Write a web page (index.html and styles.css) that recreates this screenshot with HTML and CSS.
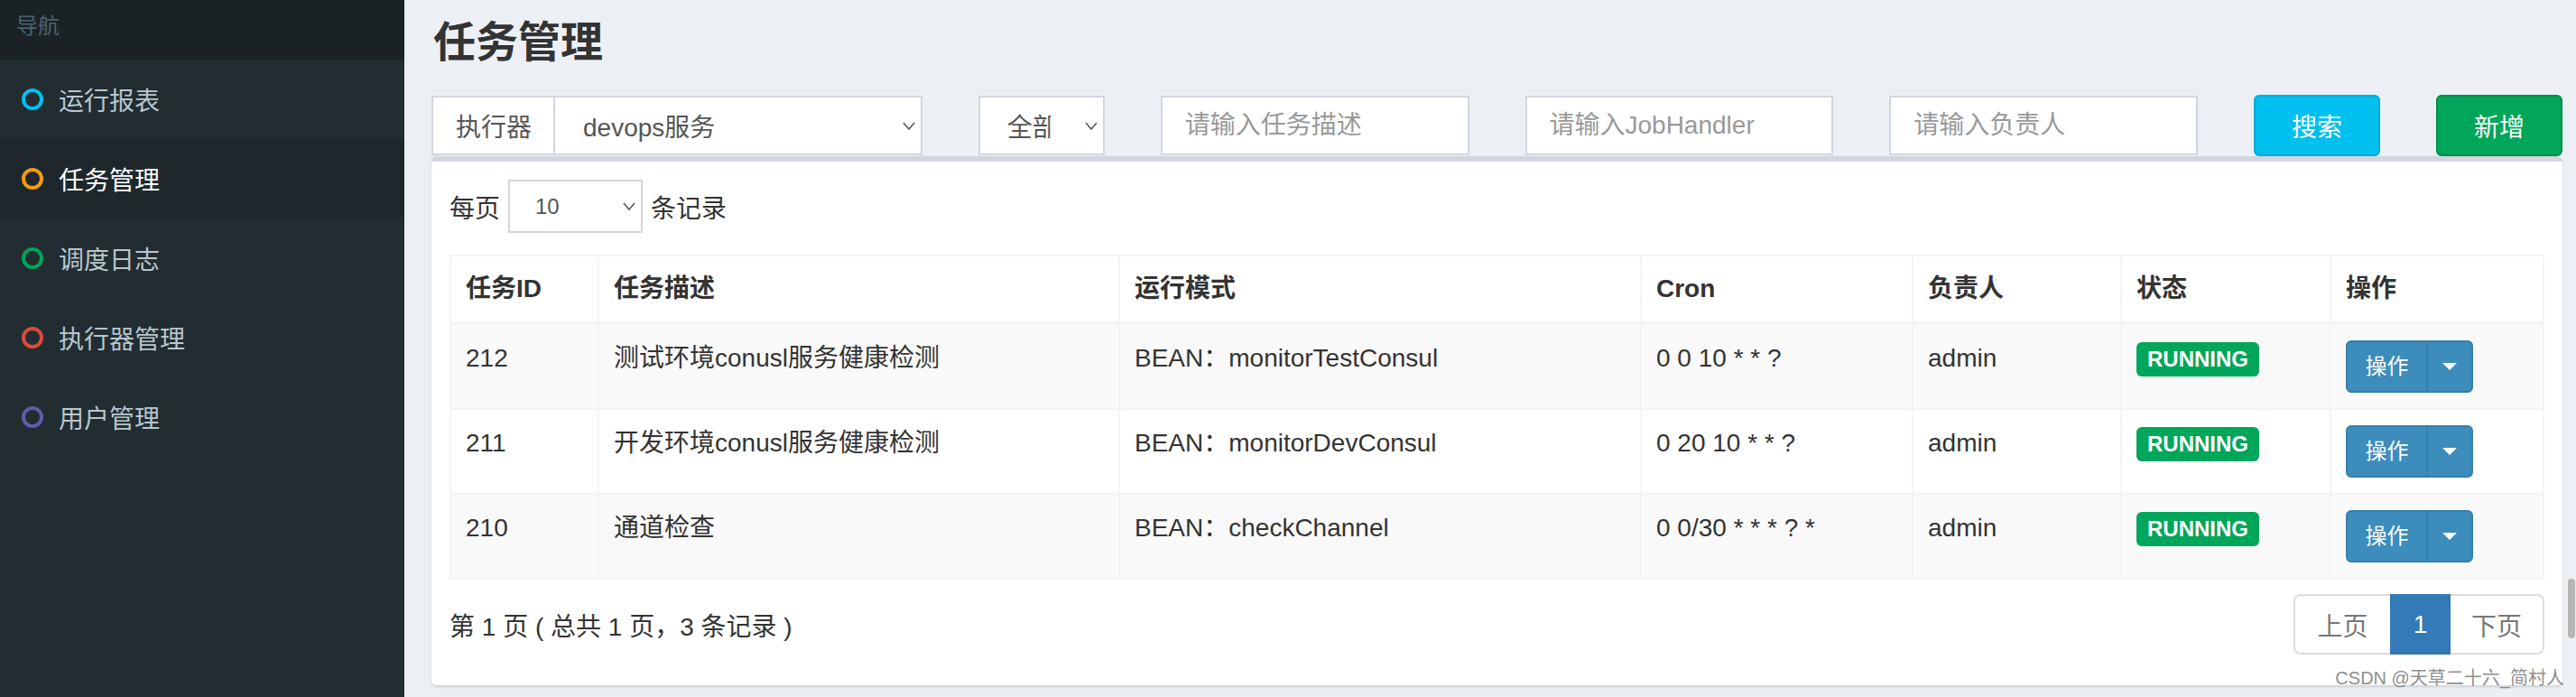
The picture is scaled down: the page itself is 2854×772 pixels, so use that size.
FILE: index.html
```html
<!DOCTYPE html>
<html lang="zh-CN">
<head>
<meta charset="utf-8">
<title>任务管理</title>
<link rel="stylesheet" href="styles.css">
</head>
<body>
<div class="app">
  <aside class="sidebar">
    <div class="nav-header">导航</div>
    <ul class="menu">
      <li class="menu-item"><span class="ring ring-aqua"></span><span>运行报表</span></li>
      <li class="menu-item active"><span class="ring ring-orange"></span><span>任务管理</span></li>
      <li class="menu-item"><span class="ring ring-green"></span><span>调度日志</span></li>
      <li class="menu-item"><span class="ring ring-red"></span><span>执行器管理</span></li>
      <li class="menu-item"><span class="ring ring-purple"></span><span>用户管理</span></li>
    </ul>
  </aside>
  <main class="content">
    <h1 class="page-title">任务管理</h1>
    <div class="filters">
      <div class="group span3">
        <span class="addon">执行器</span>
        <div class="select select-group">
          <span class="value">devops服务</span>
          <svg class="chev" width="14" height="9" viewBox="0 0 14 9"><path d="M1 1 L7 8 L13 1" fill="none" stroke="#555" stroke-width="1.6"/></svg>
        </div>
      </div>
      <div class="select select-short span1">
        <span class="value clip">全部</span>
        <svg class="chev" width="14" height="9" viewBox="0 0 14 9"><path d="M1 1 L7 8 L13 1" fill="none" stroke="#555" stroke-width="1.6"/></svg>
      </div>
      <input class="field span2" type="text" placeholder="请输入任务描述">
      <input class="field span2" type="text" placeholder="请输入JobHandler">
      <input class="field span2" type="text" placeholder="请输入负责人">
      <button class="btn btn-search span1">搜索</button>
      <button class="btn btn-add span1">新增</button>
    </div>
    <section class="box">
      <div class="box-body">
        <div class="length">
          <span>每页</span>
          <div class="select select-sm">
            <span class="value">10</span>
            <svg class="chev" width="14" height="9" viewBox="0 0 14 9"><path d="M1 1 L7 8 L13 1" fill="none" stroke="#555" stroke-width="1.6"/></svg>
          </div>
          <span>条记录</span>
        </div>
        <table class="grid">
          <colgroup>
            <col class="c-id"><col class="c-desc"><col class="c-mode"><col class="c-cron"><col class="c-owner"><col class="c-status"><col class="c-op">
          </colgroup>
          <thead>
            <tr><th>任务ID</th><th>任务描述</th><th>运行模式</th><th>Cron</th><th>负责人</th><th>状态</th><th>操作</th></tr>
          </thead>
          <tbody>
            <tr>
              <td>212</td><td>测试环境conusl服务健康检测</td><td>BEAN：monitorTestConsul</td><td>0 0 10 * * ?</td><td>admin</td>
              <td><span class="badge">RUNNING</span></td>
              <td><span class="op"><span class="op-main">操作</span><span class="op-caret"><span class="caret"></span></span></span></td>
            </tr>
            <tr>
              <td>211</td><td>开发环境conusl服务健康检测</td><td>BEAN：monitorDevConsul</td><td>0 20 10 * * ?</td><td>admin</td>
              <td><span class="badge">RUNNING</span></td>
              <td><span class="op"><span class="op-main">操作</span><span class="op-caret"><span class="caret"></span></span></span></td>
            </tr>
            <tr>
              <td>210</td><td>通道检查</td><td>BEAN：checkChannel</td><td>0 0/30 * * * ? *</td><td>admin</td>
              <td><span class="badge">RUNNING</span></td>
              <td><span class="op"><span class="op-main">操作</span><span class="op-caret"><span class="caret"></span></span></span></td>
            </tr>
          </tbody>
        </table>
        <div class="table-footer">
          <span class="info">第 1 页 ( 总共 1 页，3 条记录 )</span>
          <ul class="pagination">
            <li class="page disabled first">上页</li>
            <li class="page current">1</li>
            <li class="page disabled last">下页</li>
          </ul>
        </div>
      </div>
    </section>
    <div class="watermark">CSDN @天草二十六_简村人</div>
    <div class="scroll-thumb"></div>
  </main>
</div>
</body>
</html>
```
FILE: styles.css
```css
* { box-sizing: border-box; }
html, body {
  margin: 0;
  padding: 0;
  width: 2854px;
  height: 772px;
  overflow: hidden;
  font-family: "Liberation Sans", "Noto Sans CJK SC", sans-serif;
  color: #333;
  background: #ecf0f5;
}
.app {
  display: flex;
  height: 772px;
}

/* sidebar */
.sidebar {
  width: 448px;
  flex: 0 0 448px;
  background: #222d32;
  height: 772px;
}
.nav-header {
  height: 66px;
  background: #1a2226;
  color: #4b646f;
  font-size: 24px;
  line-height: 58px;
  padding-left: 18px;
}
.menu {
  list-style: none;
  margin: 0;
  padding: 0;
}
.menu-item {
  height: 88px;
  display: flex;
  align-items: center;
  padding-left: 24px;
  gap: 17px;
  font-size: 28px;
  color: #b8c7ce;
}
.menu-item.active {
  background: #1e282c;
  color: #fff;
}
.ring {
  width: 24px;
  height: 24px;
  border-radius: 50%;
  border: 4px solid;
  flex: 0 0 24px;
}
.ring-aqua { border-color: #00c0ef; }
.ring-orange { border-color: #f39c12; }
.ring-green { border-color: #00a65a; }
.ring-red { border-color: #dd4b39; }
.ring-purple { border-color: #605ca8; }

/* content */
.content {
  position: relative;
  flex: 1;
  padding: 21px 17px 0 30px;
}
.page-title {
  margin: 0 0 0 2px;
  font-size: 47px;
  line-height: 52px;
  font-weight: bold;
  color: #333;
}
.filters {
  margin-top: 32px;
  display: grid;
  grid-template-columns: repeat(12, 1fr);
  column-gap: 62px;
  height: 68px;
  align-items: start;
}
.span1 { grid-column: span 1; }
.span2 { grid-column: span 2; }
.span3 { grid-column: span 3; }

.group {
  display: flex;
  height: 66px;
  margin-top: 1px;
}
.addon {
  width: 135px;
  flex: 0 0 135px;
  border: 2px solid #d2d6de;
  border-right: 0;
  background: #fff;
  font-size: 28px;
  color: #555;
  display: flex;
  align-items: center;
  padding-left: 25px;
}
.select {
  display: flex;
  align-items: center;
  background: #fff;
  border: 2px solid #d2d6de;
  font-size: 28px;
  color: #555;
}
.select .value {
  flex: 1;
  white-space: nowrap;
}
.select .chev { flex: 0 0 14px; }
.select-group {
  flex: 1;
  height: 66px;
  padding: 0 6px 0 31px;
}
.select-short {
  height: 66px;
  margin-top: 1px;
  padding: 0 6px 0 30px;
}
.select-short .value.clip {
  flex: 0 0 48px;
  overflow: hidden;
  margin-right: auto;
}
.field {
  height: 66px;
  margin-top: 1px;
  width: 100%;
  border: 2px solid #d2d6de;
  border-radius: 0;
  background: #fff;
  font-family: inherit;
  font-size: 28px;
  padding: 0 25px;
  color: #555;
  outline: none;
}
.field::placeholder { color: #999; }
.btn {
  height: 68px;
  width: 100%;
  border-radius: 6px;
  border: 2px solid;
  color: #fff;
  font-family: inherit;
  font-size: 28px;
  padding: 0;
}
.btn-search { background: #00c0ef; border-color: #00acd6; }
.btn-add { background: #00a65a; border-color: #008d4c; }

/* box */
.box {
  background: #fff;
  border-top: 6px solid #d2d6de;
  border-radius: 6px;
  box-shadow: 0 2px 3px rgba(0, 0, 0, 0.12);
}
.box-body {
  padding: 20px 20px 34px 20px;
}
.length {
  display: flex;
  align-items: center;
  gap: 9px;
  font-size: 28px;
  color: #333;
}
.select-sm {
  width: 149px;
  height: 59px;
  font-size: 24px;
  padding: 0 6px 0 28px;
}

.grid {
  width: 100%;
  margin-top: 24px;
  border-collapse: collapse;
  border: 2px solid #f4f4f4;
  font-size: 28px;
  table-layout: fixed;
}
.c-id { width: 164px; }
.c-desc { width: 577px; }
.c-mode { width: 578px; }
.c-cron { width: 301px; }
.c-owner { width: 231px; }
.c-status { width: 232px; }
.c-op { width: 236px; }
.grid th, .grid td {
  border: 2px solid #f4f4f4;
  padding: 16px 16px;
  line-height: 40px;
  text-align: left;
  vertical-align: top;
  white-space: nowrap;
}
.grid th {
  font-weight: bold;
  border-bottom-width: 4px;
  background: #fff;
}
.grid td { padding-top: 17px; padding-bottom: 17px; }
.grid tbody tr:nth-child(odd) td { background: #f9f9f9; }
.grid tbody tr:nth-child(even) td { background: #fff; }

.badge {
  display: inline-block;
  vertical-align: top;
  margin-top: 2px;
  height: 38px;
  line-height: 38px;
  padding: 0 12px;
  border-radius: 6px;
  background: #00a65a;
  color: #fff;
  font-size: 24px;
  font-weight: bold;
}
.op {
  display: inline-flex;
  vertical-align: top;
  height: 58px;
  border-radius: 6px;
  overflow: hidden;
  border: 2px solid #367fa9;
  background: #3c8dbc;
  color: #fff;
  font-size: 24px;
}
.op-main {
  width: 89px;
  display: flex;
  align-items: center;
  justify-content: center;
  border-right: 2px solid #367fa9;
}
.op-caret {
  width: 48px;
  display: flex;
  align-items: center;
  justify-content: center;
}
.caret {
  width: 0;
  height: 0;
  border-top: 8px solid #fff;
  border-left: 8px solid transparent;
  border-right: 8px solid transparent;
}

.table-footer {
  display: flex;
  justify-content: space-between;
  align-items: center;
  margin-top: 16px;
}
.info {
  font-size: 28px;
  color: #333;
}
.pagination {
  display: flex;
  list-style: none;
  margin: 0;
  padding: 0;
}
.page {
  height: 67px;
  display: flex;
  align-items: center;
  justify-content: center;
  font-size: 28px;
  border: 2px solid #ddd;
  background: #fff;
}
.page.disabled { color: #777; }
.page.first {
  width: 107px;
  border-radius: 8px 0 0 8px;
  border-right: 0;
}
.page.current {
  width: 67px;
  background: #337ab7;
  border-color: #337ab7;
  color: #fff;
}
.page.last {
  width: 104px;
  border-radius: 0 8px 8px 0;
  border-left: 0;
}

.watermark {
  position: absolute;
  right: 15px;
  bottom: 8px;
  font-size: 20px;
  color: rgba(110, 110, 110, 0.8);
  white-space: nowrap;
}
.scroll-thumb {
  position: absolute;
  right: 3px;
  top: 641px;
  width: 8px;
  height: 66px;
  border-radius: 4px;
  background: #b5b5b5;
}
```
